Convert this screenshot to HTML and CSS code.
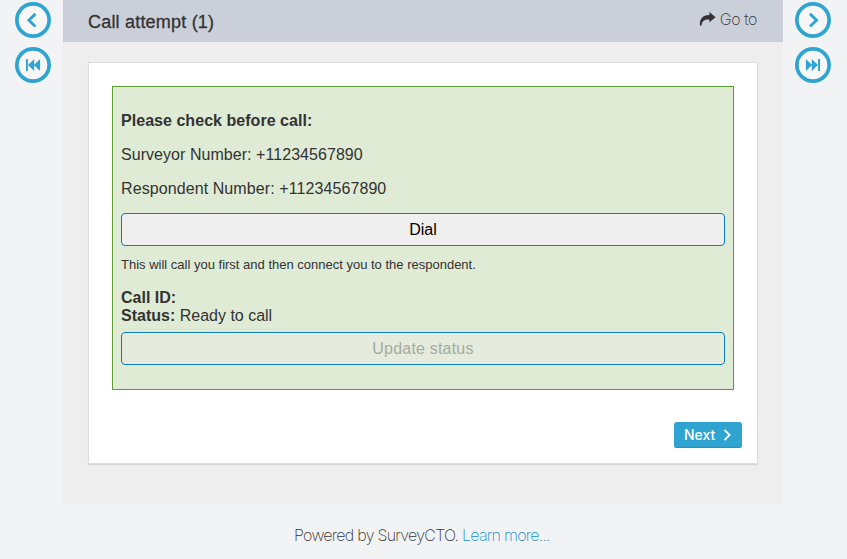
FILE: index.html
```html
<!DOCTYPE html>
<html lang="en">
<head>
<meta charset="utf-8">
<title>Call attempt</title>
<link rel="stylesheet" href="styles.css">
</head>
<body>
<div class="layout">
  <nav class="side">
    <a class="circle" aria-label="Back"><svg width="36" height="36" viewBox="0 0 36 36"><path class="chev" d="M20.4 11.9 13.9 18.2l6.5 6.3"/></svg></a>
    <a class="circle" aria-label="First"><svg width="36" height="36" viewBox="0 0 36 36"><path class="solid" d="M11 12.1h1.9v12H11zM19.2 12.1v12l-6.2-6zM25.1 12.1v12l-6.2-6z"/></svg></a>
  </nav>
  <main class="panel">
    <header class="bar">
      <h1>Call attempt (1)</h1>
      <a class="goto"><svg width="17" height="15" viewBox="0 0 17 15"><path d="M10.4 0 16.6 5.2l-6.2 5.1V7.4C5.6 7.2 2.9 8.6 2.4 13.8H1.1C.1 7.5 3.2 3 10.4 2.9z"/></svg><span>Go to</span></a>
    </header>
    <section class="card">
      <div class="call">
        <p class="lead"><b>Please check before call:</b></p>
        <p class="surveyor">Surveyor Number: +11234567890</p>
        <p class="respondent">Respondent Number: +11234567890</p>
        <button class="action">Dial</button>
        <p class="hint">This will call you first and then connect you to the respondent.</p>
        <div class="status"><b>Call ID:</b><br><b>Status:</b> Ready to call</div>
        <button class="action" disabled>Update status</button>
      </div>
      <button class="next"><span>Next</span><svg width="9" height="12" viewBox="0 0 9 12"><path d="m1.6 1 5 5-5 5"/></svg></button>
    </section>
  </main>
  <nav class="side">
    <a class="circle" aria-label="Forward"><svg width="36" height="36" viewBox="0 0 36 36"><path class="chev" d="m15 11.9 6.5 6.3-6.5 6.3"/></svg></a>
    <a class="circle" aria-label="Last"><svg width="36" height="36" viewBox="0 0 36 36"><path class="solid" d="M25 12.1h-1.9v12H25zM16.8 12.1v12l6.2-6zM10.9 12.1v12l6.2-6z"/></svg></a>
  </nav>
</div>
<footer><span class="powered">Powered by SurveyCTO.</span> <a>Learn more...</a></footer>
</body>
</html>
```
FILE: styles.css
```css
* { box-sizing: border-box; }
body {
  margin: 0;
  height: 559px;
  overflow: hidden;
  background: #f1f3f5;
  color: #333;
  font: 16px/18px "Liberation Sans", Arial, sans-serif;
}
.layout { display: flex; height: 504px; }
.side { width: 63px; padding: 2px 0 0 15px; display: flex; flex-direction: column; gap: 9px; }
.side:last-child { padding-left: 12px; width: 64px; }
.circle { width: 36px; height: 36px; border-radius: 50%; background: #f7f7f8; box-shadow: inset 0 0 0 3.7px #2fa4d1; }
.circle svg { display: block; }
.chev { fill: none; stroke: #2fa4d1; stroke-width: 2.9; }
.solid { fill: #2fa4d1; }
.panel { width: 720px; background: #eee; }
.bar { height: 42px; padding: 0 25px; background: #cbcfd9; display: flex; justify-content: space-between; }
h1 { margin: 12px 0 0; font-size: 18px; line-height: 20px; font-weight: 400; letter-spacing: 0.2px; -webkit-text-stroke: 0.3px #333; }
.goto { display: flex; gap: 4px; margin: 11px 1px 0 0; font: 200 16px/16px Inter, sans-serif; letter-spacing: -0.4px; }
.goto svg { fill: #333; margin-top: 1px; }
.card {
  width: 670px;
  height: 402px;
  margin: 20px 25px 0;
  padding: 23px;
  background: #fff;
  border: 1px solid #ddd;
  box-shadow: 0 1px 1px #d8d8d8;
}
.call { width: 622px; height: 304px; padding: 25px 8px 0; background: #dfebd5; border: 1px solid #5f9c31; }
.call p { margin: 0 0 16px; }
.call .lead { letter-spacing: 0.04px; }
.call .surveyor { letter-spacing: 0.05px; }
.call .respondent { margin-bottom: 15px; letter-spacing: 0.09px; }
.action {
  display: block;
  width: 100%;
  height: 33px;
  padding: 0;
  border: 1px solid #087fc4;
  border-radius: 4px;
  background: #efefef;
  color: #000;
  font: 16px/18px "Liberation Sans", Arial, sans-serif;
}
.action:disabled { background: #e5ebdd; color: #a6ac9f; letter-spacing: 0.2px; }
.call .hint { margin: 10px 0 15px; font-size: 13px; }
.status { margin-bottom: 7px; }
.next {
  display: flex;
  align-items: center;
  gap: 8px;
  width: 68px;
  height: 26px;
  margin: 32px 0 0 562px;
  padding: 0 0 0 10px;
  border: 0;
  border-radius: 3px;
  background: #2fa4d1;
  box-shadow: inset 0 -1px #2892bd;
  color: #fff;
  font: 500 14px/16px Inter, sans-serif;
}
.next svg { fill: none; stroke: #fff; stroke-width: 1.8; }
footer { padding: 21px 0 0 294px; font: 200 16px/20px Inter, sans-serif; letter-spacing: -0.74px; white-space: nowrap; }
footer a { color: #168dce; }
```
